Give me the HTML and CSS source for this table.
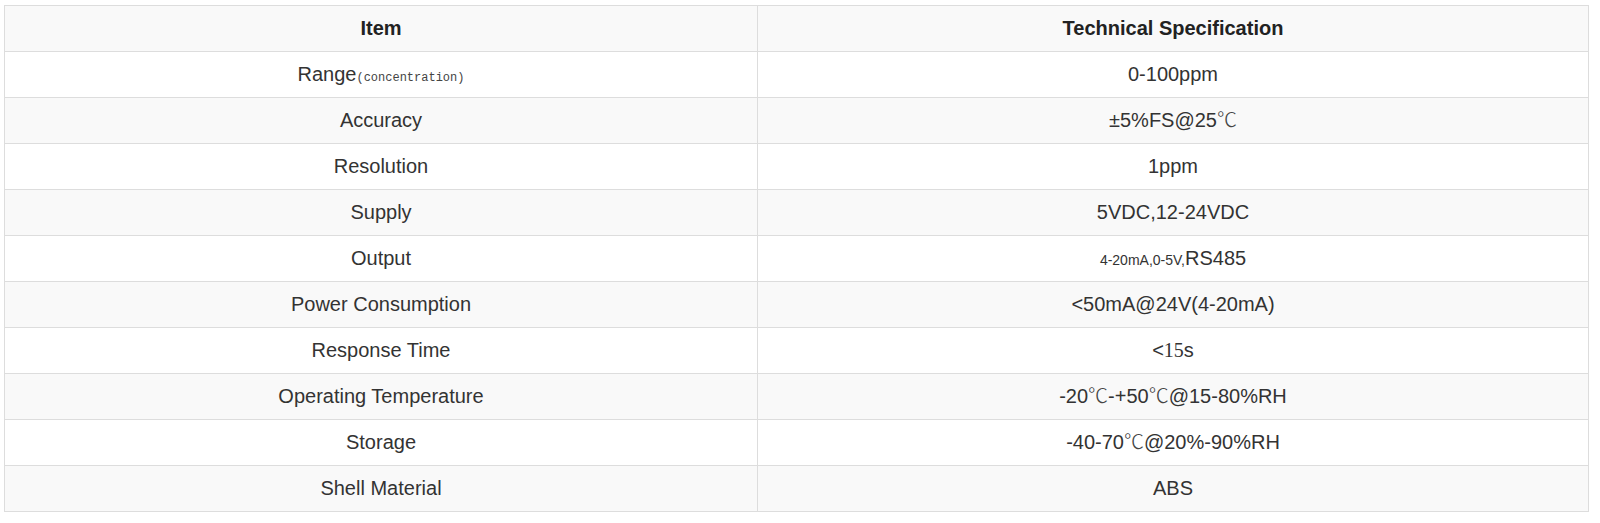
FILE: index.html
```html
<!DOCTYPE html>
<html>
<head>
<meta charset="utf-8">
<link rel="stylesheet" href="styles.css">
</head>
<body>
<div class="wrap">
<table class="spec">
<colgroup><col class="c1"><col class="c2"></colgroup>
<tbody>
<tr class="head"><td>Item</td><td>Technical Specification</td></tr>
<tr><td>Range<span class="mono">(concentration)</span></td><td>0-100ppm</td></tr>
<tr><td>Accuracy</td><td>±5%FS@25<span class="deg">℃</span></td></tr>
<tr><td>Resolution</td><td>1ppm</td></tr>
<tr><td>Supply</td><td>5VDC,12-24VDC</td></tr>
<tr><td>Output</td><td><span class="small">4-20mA,0-5V,</span>RS485</td></tr>
<tr><td>Power Consumption</td><td>&lt;50mA@24V(4-20mA)</td></tr>
<tr><td>Response Time</td><td>&lt;<span class="serif">15</span>s</td></tr>
<tr><td>Operating Temperature</td><td>-20<span class="deg">℃</span>-+50<span class="deg">℃</span>@15-80%RH</td></tr>
<tr><td>Storage</td><td>-40-70<span class="deg">℃</span>@20%-90%RH</td></tr>
<tr><td>Shell Material</td><td>ABS</td></tr>
</tbody>
</table>
</div>
</body>
</html>
```
FILE: styles.css
```css
html, body { margin: 0; padding: 0; background: #fff; }
.wrap { padding: 5px 12px 0 4px; }
.spec {
  width: 1584px;
  border-collapse: collapse;
  table-layout: fixed;
  font-family: "Liberation Sans", Arial, sans-serif;
  font-size: 20px;
  color: #333;
  border: 1px solid #ddd;
}
.c1 { width: 753px; }
.c2 { width: 831px; }
.spec td {
  border: 1px solid #ddd;
  text-align: center;
  vertical-align: middle;
  padding: 8px 8px;
  line-height: 29px;
  height: 29px;
}
.spec tr:nth-child(odd) { background: #f9f9f9; }
.spec tr.head td { font-weight: bold; color: #222; }
.mono { font-family: "Liberation Mono", "Courier New", monospace; font-size: 12px; color: #444; line-height: 1; }
.deg { font-family: "Noto Sans CJK SC", sans-serif; font-weight: 300; color: #444; line-height: 1; }
.serif { font-family: "Liberation Serif", "Times New Roman", serif; line-height: 1; }
.small { font-size: 14px; line-height: 1; }
```
